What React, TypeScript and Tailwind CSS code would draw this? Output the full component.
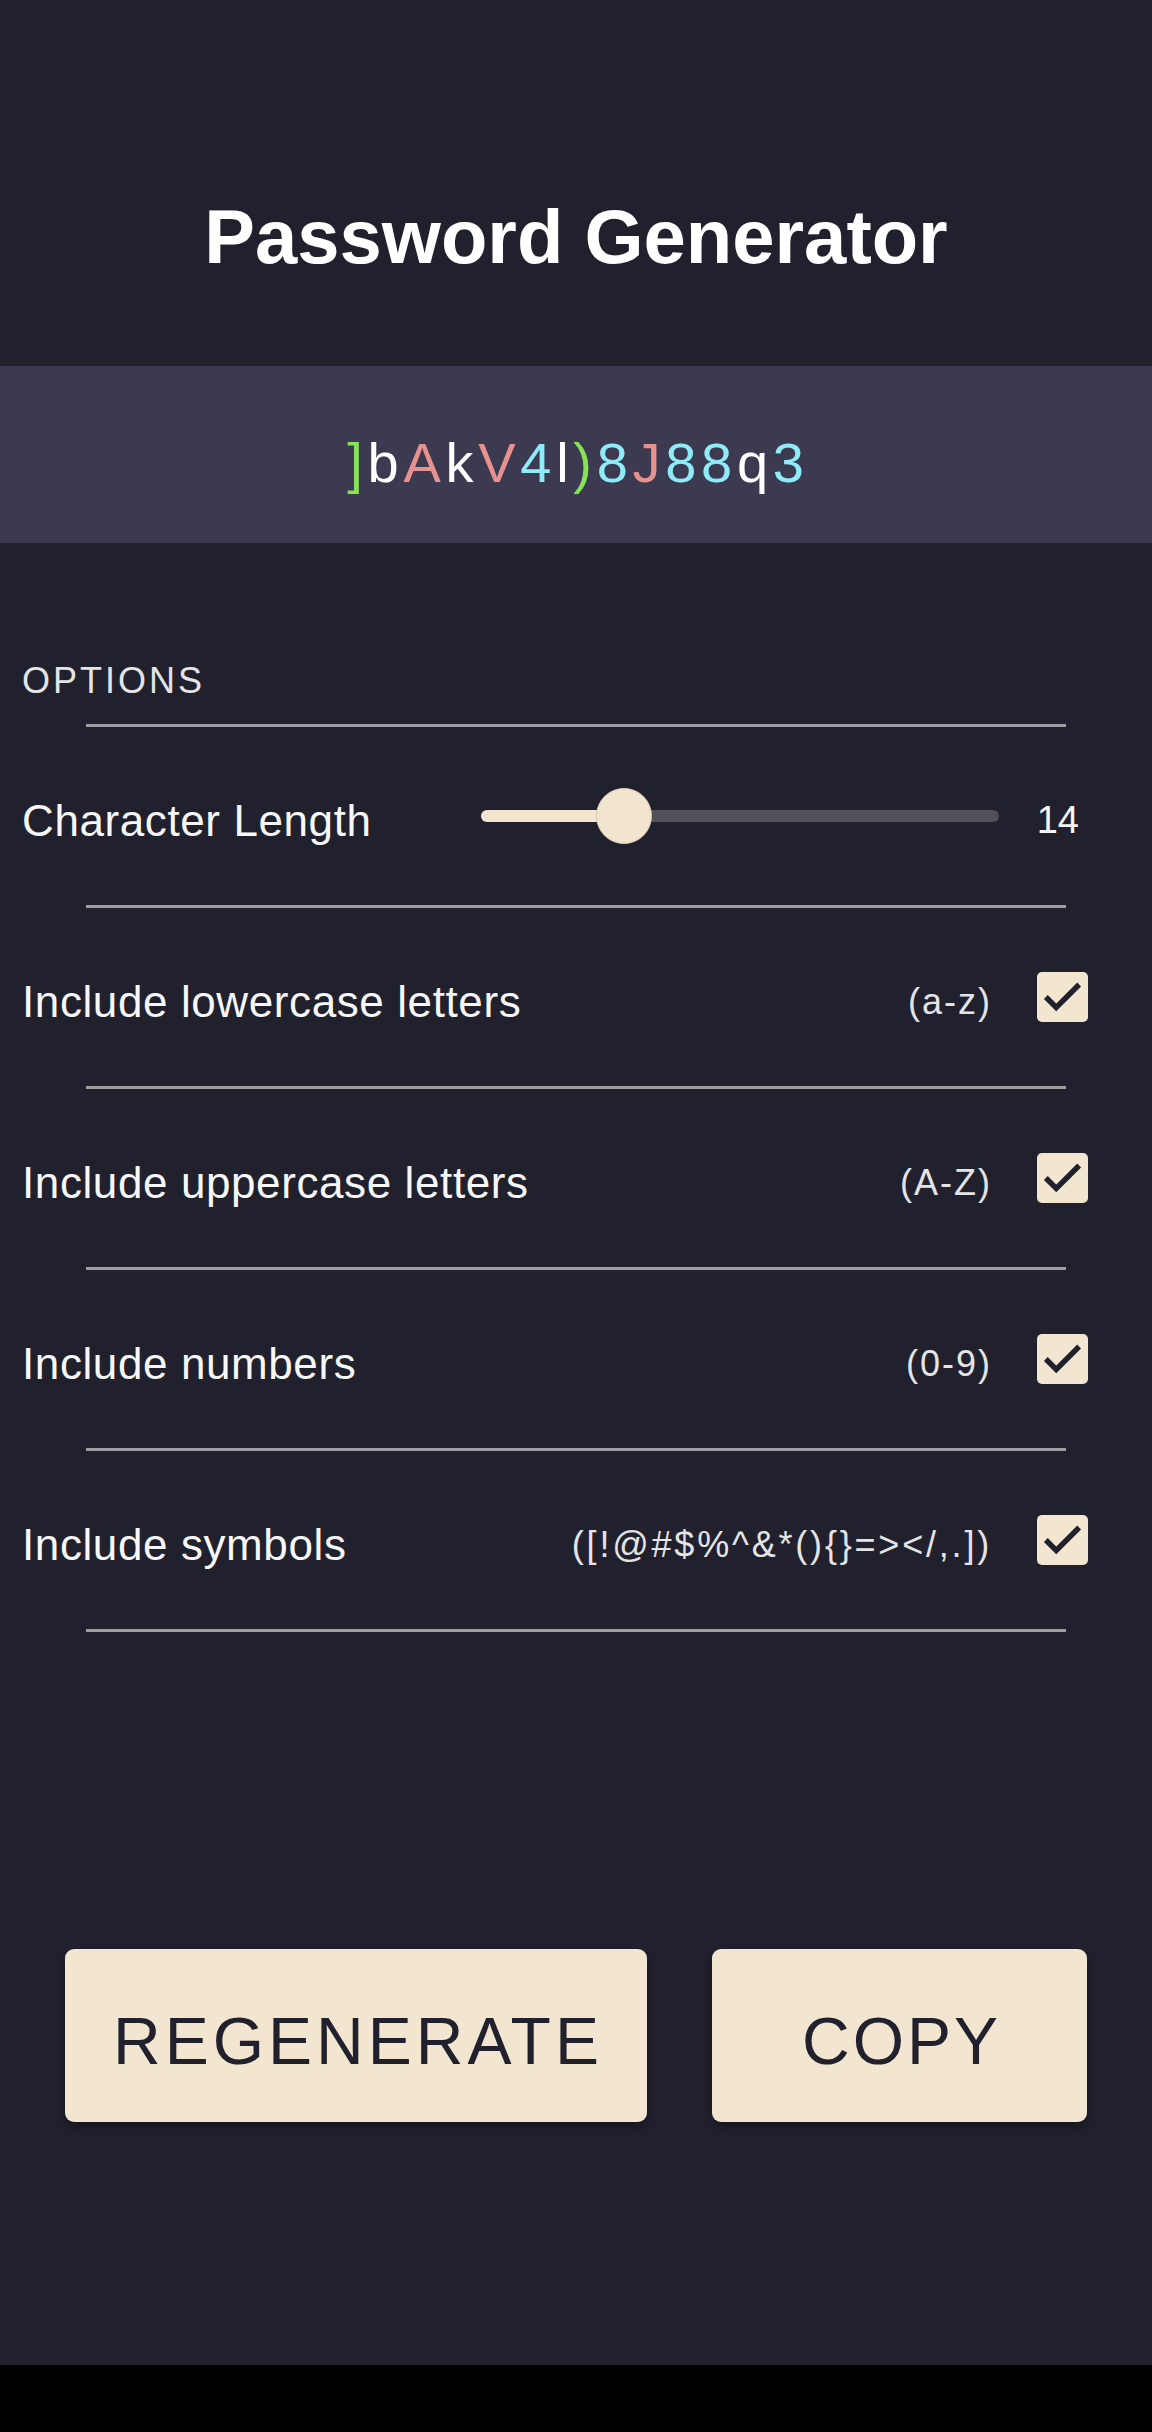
import React from "react";

type Cat = "g" | "w" | "s" | "c";
const PASSWORD: [string, Cat][] = [
  ["]", "g"],
  ["b", "w"],
  ["A", "s"],
  ["k", "w"],
  ["V", "s"],
  ["4", "c"],
  ["l", "w"],
  [")", "g"],
  ["8", "c"],
  ["J", "s"],
  ["8", "c"],
  ["8", "c"],
  ["q", "w"],
  ["3", "c"],
];

const COLOR: Record<Cat, string> = {
  g: "text-[#86e356]",
  w: "text-white",
  s: "text-[#e8928f]",
  c: "text-[#8eebf7]",
};

function Divider() {
  return <div className="mx-auto h-[3px] w-[85%] bg-[#9d9da2]" />;
}

function CheckBox() {
  return (
    <div className="flex h-[50px] w-[51px] items-center justify-center rounded-[5px] bg-[#f3e6d1]">
      <svg width="51" height="50" viewBox="0 0 24 24" fill="none">
        <path d="M20 6 9 17l-5-5" stroke="#21212e" strokeWidth="2.6" />
      </svg>
    </div>
  );
}

function OptionRow({
  label,
  spec,
  wide,
}: {
  label: string;
  spec: string;
  wide?: boolean;
}) {
  return (
    <div className="flex h-[178px] items-center pl-[22px] pr-[64px]">
      <span className="mt-[10px] flex-1 text-[44px] leading-[44px] tracking-[0.6px] text-[#f7f7f7]">
        {label}
      </span>
      <span
        className={
          wide
            ? "mt-[10px] text-[36px] leading-[36px] tracking-[2.8px] text-[#e4e4e6]"
            : "mt-[10px] text-[36px] leading-[36px] tracking-[2px] text-[#e4e4e6]"
        }
      >
        {spec}
      </span>
      <div className="ml-[45px]">
        <CheckBox />
      </div>
    </div>
  );
}

export default function App() {
  return (
    <div className="min-h-[2432px] bg-black font-[family-name:'Liberation_Sans',Arial,sans-serif]">
      <div className="h-[2365px] bg-[#21212e]">
        <header className="h-[366px] pt-[199px] text-center">
          <h1 className="text-[76px] font-bold leading-[76px] text-white">
            Password Generator
          </h1>
        </header>

        <div className="h-[177px] bg-[#3b3a50] pl-[4px] pt-[69px] text-center text-[56px] leading-[56px] tracking-[4.7px]">
          {PASSWORD.map(([ch, c], i) => (
            <span key={i} className={COLOR[c]}>
              {ch}
            </span>
          ))}
        </div>

        <div className="pl-[22px] pt-[120px] text-[36px] leading-[36px] tracking-[3px] text-[#e4e4e6]">
          OPTIONS
        </div>
        <div className="mt-[25px]">
          <Divider />
        </div>

        <div className="flex h-[178px] items-center pl-[22px] pr-[64px]">
          <span className="mt-[10px] flex-1 text-[44px] leading-[44px] tracking-[0.6px] text-[#f7f7f7]">
            Character Length
          </span>
          <div className="relative flex h-[56px] w-[518px] items-center">
            <div className="h-[12px] w-full overflow-hidden rounded-full bg-[#525157]">
              <div className="h-full w-[143px] bg-[#f3e6d1]" />
            </div>
            <div className="absolute left-[115px] top-0 h-[56px] w-[56px] rounded-full border border-[#d9ccb6] bg-[#f3e6d1]" />
          </div>
          <span className="ml-[38px] mr-[9px] mt-[8px] text-[38px] leading-[38px] text-[#f7f7f7]">
            14
          </span>
        </div>
        <Divider />

        <OptionRow label="Include lowercase letters" spec="(a-z)" />
        <Divider />
        <OptionRow label="Include uppercase letters" spec="(A-Z)" />
        <Divider />
        <OptionRow label="Include numbers" spec="(0-9)" />
        <Divider />
        <OptionRow label="Include symbols" spec="([!@#$%^&*(){}=></,.])" wide />
        <Divider />

        <div className="mt-[317px] flex gap-[65px] pl-[65px]">
          <button className="flex h-[173px] w-[582px] items-center justify-center rounded-[9px] bg-[#f3e6d1] pl-[4px] pt-[10px] text-[66px] leading-[66px] tracking-[4px] text-[#21212e] shadow-[0_4px_8px_rgba(0,0,0,0.35)]">
            REGENERATE
          </button>
          <button className="flex h-[173px] w-[375px] items-center justify-center rounded-[9px] bg-[#f3e6d1] pl-[4px] pt-[10px] text-[66px] leading-[66px] tracking-[3px] text-[#21212e] shadow-[0_4px_8px_rgba(0,0,0,0.35)]">
            COPY
          </button>
        </div>
      </div>
    </div>
  );
}
